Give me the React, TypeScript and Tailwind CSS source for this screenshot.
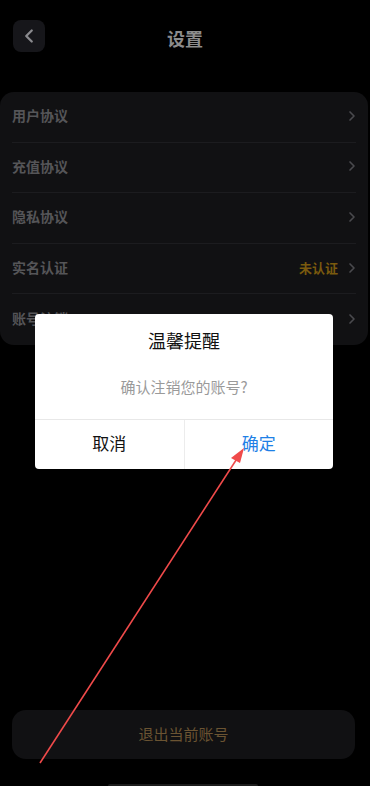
import { ChevronLeft, ChevronRight } from 'lucide-react'

const rows = [
  { label: '用户协议' },
  { label: '充值协议' },
  { label: '隐私协议' },
  { label: '实名认证', extra: '未认证' },
  { label: '账号注销' },
]

export default function App() {
  return (
    <div
      className="relative w-[370px] h-[786px] overflow-hidden bg-black"
      style={{ fontFamily: '"Noto Sans CJK SC", "Noto Sans", sans-serif' }}
    >
      {/* Header */}
      <div className="relative h-[76px] flex items-center justify-center">
        <div className="absolute left-[13px] top-[20px] w-[32px] h-[32px] rounded-lg bg-[#16161a] flex items-center justify-center">
          <ChevronLeft size={22} strokeWidth={2.5} className="text-[#8a8a8e]" />
        </div>
        <span className="text-[18px] font-bold text-[#8c8c8c] leading-none">设置</span>
      </div>

      {/* Settings list */}
      <div className="mt-[16px] mr-[2px] rounded-[14px] bg-[#111113] px-[12px]">
        {rows.map((r, i) => (
          <div
            key={r.label}
            className={`h-[50.6px] flex items-center justify-between ${i < rows.length - 1 ? 'border-b border-[#1c1c1f]' : ''}`}
          >
            <span className="text-[14px] font-bold text-[#555558] mt-[-2px]">{r.label}</span>
            <div className="flex items-center gap-[6px] mt-[-2px]">
              {r.extra && <span className="text-[13px] font-bold text-[#7a5a0e]">{r.extra}</span>}
              <ChevronRight size={16} strokeWidth={2.5} className="text-[#4a4a4e] mr-[-4px]" />
            </div>
          </div>
        ))}
      </div>

      {/* Logout button */}
      <div className="absolute left-[12px] right-[15px] top-[710px] h-[49px] rounded-[14px] bg-[#111113] flex items-center justify-center">
        <span className="text-[15px] text-[#6b5432]">退出当前账号</span>
      </div>

      {/* Home indicator */}
      <div className="absolute left-[108px] top-[784px] w-[150px] h-[4px] rounded-full bg-[#1c1c1c]" />

      {/* Dialog */}
      <div className="absolute left-[35px] top-[314px] w-[298px] h-[155px] rounded-[4px] bg-white flex flex-col">
        <div className="pt-[13px] text-center text-[18px] text-[#111] leading-[26px]">温馨提醒</div>
        <div className="pt-[23px] text-center text-[15px] text-[#9a9a9a] leading-[22px]">确认注销您的账号?</div>
        <div className="mt-auto h-[50px] border-t border-[#e8e8e8] flex">
          <div className="flex-1 flex items-center justify-center pb-[4px] text-[17px] text-[#111] border-r border-[#ececec]">取消</div>
          <div className="flex-1 flex items-center justify-center pb-[4px] text-[17px] text-[#1e80e6]">确定</div>
        </div>
      </div>

      {/* Annotation arrow */}
      <svg className="absolute left-0 top-0" width="370" height="786" viewBox="0 0 370 786">
        <line x1="40" y1="763" x2="240" y2="454" stroke="#f04a4a" strokeWidth="1.6" />
        <polygon points="244,448 231,458 240,463" fill="#f04a4a" />
      </svg>
    </div>
  )
}
